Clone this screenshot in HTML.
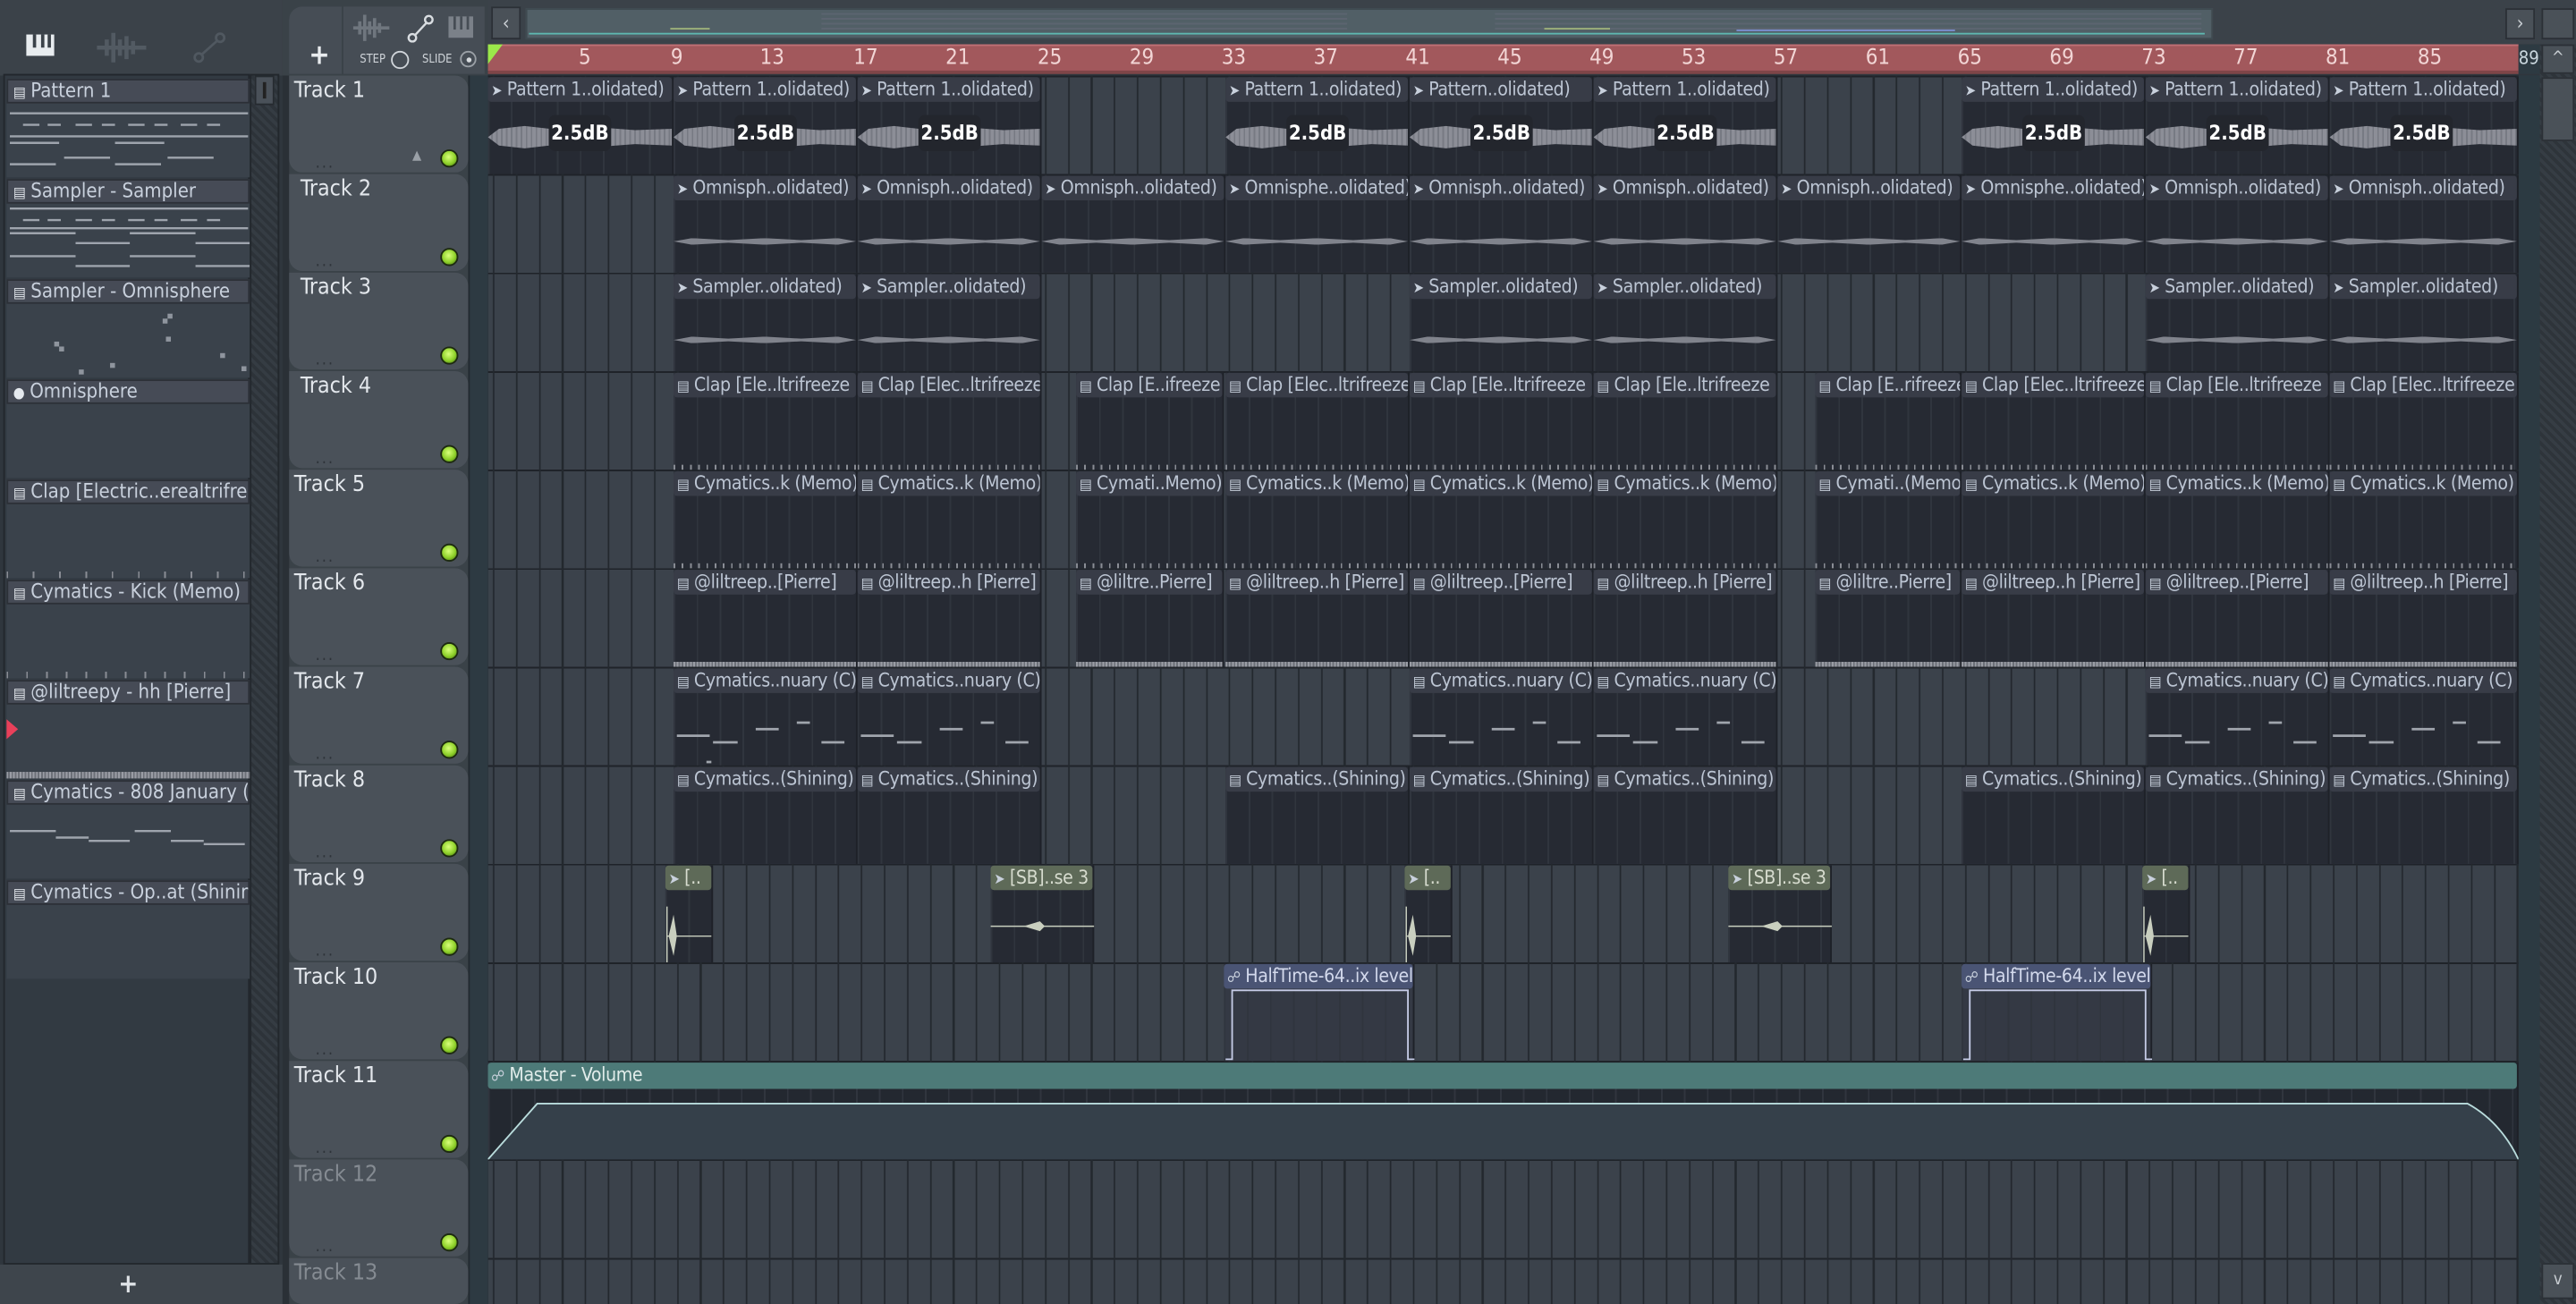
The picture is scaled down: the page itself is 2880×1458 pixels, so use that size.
<!DOCTYPE html>
<html><head><meta charset="utf-8"><style>
*{margin:0;padding:0;box-sizing:border-box}
html,body{width:2880px;height:1458px;overflow:hidden;background:#2f363d}
#w{position:absolute;left:0;top:0;width:1568px;height:794px;transform:scale(1.83674,1.83627);transform-origin:0 0;font-family:"DejaVu Sans Condensed","Liberation Sans",sans-serif;background:#2f363d}
.a{position:absolute}
.grid{position:absolute;left:297px;top:46px;width:1236px;height:748px;background-color:#3b424b;
background-image:repeating-linear-gradient(90deg,#23282e 0,#23282e 1px,transparent 1px,transparent 14px),repeating-linear-gradient(180deg,#1f2329 0,#1f2329 1px,transparent 1px,transparent 60px);background-position:3px 0,0 0}
.c{position:absolute;height:59px;background-color:#262a33;background-image:repeating-linear-gradient(90deg,#30353e 0,#30353e 1px,transparent 1px,transparent 14px);border-right:1px solid #1e2128}
.c b{display:block;height:15px;background:#383c47;color:#bcc5d3;font-weight:normal;font-size:11.5px;line-height:15px;white-space:nowrap;overflow:hidden;padding-left:2px;letter-spacing:-0.2px;border-radius:2px}
.c b i{font-style:normal;font-size:9px;color:#c8d0dc;margin-right:3px}
.th{position:absolute;left:176px;width:109px;height:59px;background:#4a5159;border-radius:0 8px 8px 8px;color:#e3e7ec;font-size:13.5px;padding:1px 0 0 3px}
.th .led{position:absolute;left:92px;top:45px;width:11px;height:11px;border-radius:50%;background:radial-gradient(circle at 45% 40%,#d8ff7a,#8fd12a 55%,#3d6a0c);border:1px solid #1d2a10}
.th .d{position:absolute;left:16px;top:48px;color:#2e3339;font-size:10px;letter-spacing:1px}
.wv{position:absolute;left:0;right:0;top:28px;height:17px;background:repeating-linear-gradient(90deg,#8c8e97 0,#8c8e97 2px,#777a83 2px,#777a83 3px);clip-path:polygon(0 50%,6% 20%,20% 10%,40% 25%,60% 15%,80% 25%,100% 20%,100% 80%,80% 75%,60% 85%,40% 75%,20% 90%,6% 80%)}
.db{position:absolute;top:23px;width:38px;height:22px;background:#23262d;border-radius:4px;color:#fff;font-size:12px;font-weight:bold;text-align:center;line-height:22px;left:37px}
.thin{position:absolute;left:0;right:0;top:38px;height:4px;background:#80838c;clip-path:polygon(0 50%,10% 0,30% 30%,50% 0,70% 30%,90% 0,100% 50%,90% 100%,70% 70%,50% 100%,30% 70%,10% 100%)}
.ticks{position:absolute;left:0;right:0;bottom:0;height:3px;background:repeating-linear-gradient(90deg,#8a8d95 0,#8a8d95 1px,transparent 1px,transparent 5px)}
.li{position:absolute;left:4px;width:148px;height:60px;background:#3a424b}
.li b{display:block;height:15px;background:#464b56;border:1px solid #2c3037;color:#c8d0dc;font-weight:normal;font-size:12px;line-height:13px;padding-left:3px;white-space:nowrap;overflow:hidden}
.li b i{font-style:normal;font-size:9px;margin-right:3px;color:#e5e9ee}
.rn{position:absolute;top:28px;color:#f2d5d5;font-size:13px;transform:translateX(-50%)}
</style></head><body><div id="w">
<div class="a" style="left:0;top:0;width:172px;height:46px;background:#3b4249"></div>
<svg class="a" style="left:15px;top:20px" width="20" height="16"><rect x="1" y="1" width="17" height="13" fill="#e8ecef"/><rect x="5" y="1" width="2" height="8" fill="#3b4249"/><rect x="10" y="1" width="2" height="8" fill="#3b4249"/><rect x="14" y="1" width="2" height="8" fill="#3b4249"/></svg>
<svg class="a" style="left:57px;top:18px" width="34" height="22"><path d="M2 11h30M8 6v10M12 2v18M16 6v10M20 4v14M24 7v8" stroke="#525a62" stroke-width="2.5"/></svg>
<svg class="a" style="left:117px;top:18px" width="22" height="22"><circle cx="4" cy="17" r="2.5" fill="none" stroke="#505860" stroke-width="1.5"/><circle cx="17" cy="5" r="2.5" fill="none" stroke="#505860" stroke-width="1.5"/><path d="M6 15L15 7" stroke="#505860" stroke-width="1.5"/></svg>
<div class="a" style="left:2px;top:45px;width:150px;height:725px;background:#323a42;border:1px solid #22272c"></div>
<div class="a" style="left:152px;top:45px;width:18px;height:725px;background:repeating-linear-gradient(45deg,#353c43 0,#353c43 2px,#2d3339 2px,#2d3339 4px);border:1px solid #22272c"></div>
<div class="a" style="left:155px;top:46px;width:12px;height:18px;background:#4a5159;border:1px solid #262b30"><div style="margin:3px auto;width:2px;height:10px;background:#222"></div></div>
<div class="li" style="top:48px"><b><i>▤</i>Pattern 1</b>
<svg width="148" height="45"><g stroke="#9ea4ad" stroke-width="1.3"><path d="M2 6h145M10 13h10M25 13h8M42 13h10M58 13h8M74 13h10M90 13h8M106 13h10M122 13h8M2 20h145M2 24h30M66 24h30M35 33h28M98 33h28M2 37h28M66 37h28"/></g></svg></div>
<div class="li" style="top:109px"><b><i>▤</i>Sampler - Sampler</b>
<svg width="148" height="45"><g stroke="#9ea4ad" stroke-width="1.3"><path d="M2 3h145M10 10h10M25 10h8M42 10h10M58 10h8M74 10h10M90 10h8M106 10h10M122 10h8M2 15h145M2 18h40M75 18h40M42 24h33M115 24h33M2 32h40M75 32h40M42 38h33M115 38h33"/></g></svg></div>
<div class="li" style="top:170px"><b><i>▤</i>Sampler - Omnisphere</b>
<svg width="148" height="45"><g fill="#8f959e"><rect x="29" y="23" width="3" height="3"/><rect x="32" y="26" width="3" height="3"/><rect x="98" y="6" width="3" height="3"/><rect x="95" y="9" width="3" height="3"/><rect x="97" y="20" width="3" height="3"/><rect x="63" y="36" width="3" height="3"/><rect x="130" y="30" width="3" height="3"/><rect x="44" y="40" width="3" height="3"/><rect x="143" y="38" width="3" height="3"/></g></svg></div>
<div class="li" style="top:231px"><b><i>●</i>Omnisphere</b></div>
<div class="li" style="top:292px"><b><i>▤</i>Clap [Electric..erealtrifreeze</b><div class="ticks" style="height:4px;background:repeating-linear-gradient(90deg,#8a8d95 0,#8a8d95 1px,transparent 1px,transparent 16px)"></div></div>
<div class="li" style="top:353px"><b><i>▤</i>Cymatics - Kick (Memo)</b><div class="ticks" style="height:4px;background:repeating-linear-gradient(90deg,#8a8d95 0,#8a8d95 1px,transparent 1px,transparent 12px)"></div></div>
<div class="li" style="top:414px"><b><i>▤</i>@liltreepy - hh [Pierre]</b><div class="ticks" style="height:4px;background:repeating-linear-gradient(90deg,#9a9da5 0,#9a9da5 1px,#6c7078 1px,#6c7078 2px)"></div></div>
<div class="a" style="left:4px;top:438px;width:0;height:0;border-left:7px solid #e8405a;border-top:6px solid transparent;border-bottom:6px solid transparent"></div>
<div class="li" style="top:475px"><b><i>▤</i>Cymatics - 808 January (C)</b>
<svg width="148" height="45"><g stroke="#9ea4ad" stroke-width="1.3"><path d="M2 16h28M30 20h20M78 16h22M50 22h25M100 22h20M120 24h25"/></g></svg></div>
<div class="li" style="top:536px"><b><i>▤</i>Cymatics - Op..at (Shining)</b></div>
<div class="a" style="left:0;top:770px;width:172px;height:24px;background:#3e454c;color:#dfe3e7;font-size:16px;text-align:center;line-height:24px;font-weight:bold;padding-right:16px">+</div>

<div class="a" style="left:172px;top:0;width:125px;height:794px;background:#3a4248"></div>
<div class="a" style="left:172px;top:46px;width:4px;height:748px;background:#2a3036"></div>
<div class="a" style="left:285px;top:46px;width:12px;height:748px;background:#2d3a42;border-left:1px solid #232a30"></div>
<div class="a" style="left:176px;top:4px;width:32px;height:41px;background:#464d55;border-radius:8px 0 0 0"></div>
<div class="a" style="left:188px;top:24px;color:#e8ebee;font-size:17px;font-weight:bold">+</div>
<div class="a" style="left:209px;top:4px;width:86px;height:41px;background:#464d55"></div>
<svg class="a" style="left:213px;top:8px" width="80" height="18"><path d="M2 9h22M6 5v8M9 1v16M12 5v8M15 3v12M18 6v6" stroke="#6f767e" stroke-width="2"/><circle cx="38" cy="15" r="2.3" fill="none" stroke="#d9dde1" stroke-width="1.3"/><circle cx="48" cy="4" r="2.3" fill="none" stroke="#d9dde1" stroke-width="1.3"/><path d="M40 13l6.5-7" stroke="#d9dde1" stroke-width="1.3"/><rect x="60" y="2" width="15" height="13" fill="#7b8189"/><rect x="63" y="2" width="1.5" height="8" fill="#464d55"/><rect x="67" y="2" width="1.5" height="8" fill="#464d55"/><rect x="71" y="2" width="1.5" height="8" fill="#464d55"/></svg>
<div class="a" style="left:219px;top:32px;color:#cfd4d9;font-size:7px">STEP</div>
<div class="a" style="left:238px;top:31px;width:11px;height:11px;border:1px solid #cfd4d9;border-radius:50%"></div>
<div class="a" style="left:257px;top:32px;color:#cfd4d9;font-size:7px">SLIDE</div>
<div class="a" style="left:280px;top:31px;width:10px;height:10px;border:1px solid #9aa0a6;border-radius:50%"><div style="margin:2.5px;width:3px;height:3px;background:#d6dadd;border-radius:50%"></div></div>
<div class="a" style="left:297px;top:0;width:1271px;height:27px;background:#3b4249"></div>
<div class="a" style="left:299px;top:4px;width:18px;height:20px;background:#4a5158;border:1px solid #2b3036;color:#c9ced3;font-size:12px;text-align:center;line-height:18px">‹</div>
<div class="a" style="left:320px;top:5px;width:1027px;height:19px;background:#515f66;border:1px solid #3f4a50"></div>
<div class="a" style="left:500px;top:8px;width:320px;height:10px;background:repeating-linear-gradient(180deg,#5c6470 0,#5c6470 1px,transparent 1px,transparent 3px)"></div>
<div class="a" style="left:910px;top:8px;width:430px;height:10px;background:repeating-linear-gradient(180deg,#5c6470 0,#5c6470 1px,transparent 1px,transparent 3px)"></div>
<div class="a" style="left:322px;top:20px;width:1020px;height:1px;background:#5fb8b0"></div>
<div class="a" style="left:1057px;top:18px;width:133px;height:1px;background:#7a8fd0"></div>
<div class="a" style="left:408px;top:17px;width:24px;height:1px;background:#9fb47a"></div>
<div class="a" style="left:940px;top:17px;width:40px;height:1px;background:#9fb47a"></div>
<div class="a" style="left:1525px;top:5px;width:18px;height:19px;background:#4a5158;border:1px solid #2b3036;color:#c9ced3;font-size:12px;text-align:center;line-height:17px">›</div>
<div class="a" style="left:1547px;top:5px;width:20px;height:19px;background:#4a5158;border:1px solid #2b3036"></div>
<div class="a" style="left:297px;top:27px;width:1236px;height:18px;background:#a2585c;border-top:1px solid #c07075;border-bottom:2px solid #7f4548"></div>
<div class="a" style="left:1533px;top:27px;width:13px;height:18px;background:#2d3a42;color:#c9d6dd;font-size:11px;line-height:18px">89</div>
<div class="a" style="left:297px;top:27px;width:0;height:0;border-left:9px solid #9be84a;border-bottom:12px solid transparent"></div>
<div class="rn" style="left:356px">5</div><div class="rn" style="left:412px">9</div><div class="rn" style="left:470px">13</div><div class="rn" style="left:527px">17</div><div class="rn" style="left:583px">21</div><div class="rn" style="left:639px">25</div><div class="rn" style="left:695px">29</div><div class="rn" style="left:751px">33</div><div class="rn" style="left:807px">37</div><div class="rn" style="left:863px">41</div><div class="rn" style="left:919px">45</div><div class="rn" style="left:975px">49</div><div class="rn" style="left:1031px">53</div><div class="rn" style="left:1087px">57</div><div class="rn" style="left:1143px">61</div><div class="rn" style="left:1199px">65</div><div class="rn" style="left:1255px">69</div><div class="rn" style="left:1311px">73</div><div class="rn" style="left:1367px">77</div><div class="rn" style="left:1423px">81</div><div class="rn" style="left:1479px">85</div>
<div class="a" style="left:1533px;top:46px;width:13px;height:748px;background:#2c3a42"></div>
<div class="a" style="left:1546px;top:27px;width:22px;height:767px;background:repeating-linear-gradient(45deg,#363d44 0,#363d44 2px,#2e343a 2px,#2e343a 4px)"></div>
<div class="a" style="left:1547px;top:27px;width:20px;height:18px;background:#4a5158;border:1px solid #2b3036;color:#c9ced3;font-size:10px;text-align:center;line-height:16px">^</div>
<div class="a" style="left:1547px;top:47px;width:20px;height:39px;background:#4a5158;border:1px solid #2b3036"></div>
<div class="a" style="left:1547px;top:769px;width:20px;height:22px;background:#4a5158;border:1px solid #2b3036;color:#c9ced3;font-size:10px;text-align:center;line-height:20px">v</div>

<div class="grid"></div>

<div class="th" style="top:46px">Track 1<span style="position:absolute;left:75px;top:44px;color:#9aa0a7;font-size:8px">▲</span><span class="d">...</span><span class="led"></span></div>
<div class="th" style="top:106px">&nbsp;Track 2<span class="d">...</span><span class="led"></span></div>
<div class="th" style="top:166px">&nbsp;Track 3<span class="d">...</span><span class="led"></span></div>
<div class="th" style="top:226px">&nbsp;Track 4<span class="d">...</span><span class="led"></span></div>
<div class="th" style="top:286px">Track 5<span class="d">...</span><span class="led"></span></div>
<div class="th" style="top:346px">Track 6<span class="d">...</span><span class="led"></span></div>
<div class="th" style="top:406px">Track 7<span class="d">...</span><span class="led"></span></div>
<div class="th" style="top:466px">Track 8<span class="d">...</span><span class="led"></span></div>
<div class="th" style="top:526px">Track 9<span class="d">...</span><span class="led"></span></div>
<div class="th" style="top:586px">Track 10<span class="d">...</span><span class="led"></span></div>
<div class="th" style="top:646px">Track 11<span class="d">...</span><span class="led"></span></div>
<div class="th" style="top:706px;color:#858b92">Track 12<span class="d">...</span><span class="led"></span></div>
<div class="th" style="top:766px;color:#858b92;height:28px">Track 13</div>

<div class="c" style="left:297px;top:47px;width:113px"><b><i>➤</i>Pattern 1..olidated)</b><div class="wv"></div><div class="db">2.5dB</div></div>
<div class="c" style="left:410px;top:47px;width:112px"><b><i>➤</i>Pattern 1..olidated)</b><div class="wv"></div><div class="db">2.5dB</div></div>
<div class="c" style="left:522px;top:47px;width:112px"><b><i>➤</i>Pattern 1..olidated)</b><div class="wv"></div><div class="db">2.5dB</div></div>
<div class="c" style="left:746px;top:47px;width:112px"><b><i>➤</i>Pattern 1..olidated)</b><div class="wv"></div><div class="db">2.5dB</div></div>
<div class="c" style="left:858px;top:47px;width:112px"><b><i>➤</i>Pattern..olidated)</b><div class="wv"></div><div class="db">2.5dB</div></div>
<div class="c" style="left:970px;top:47px;width:112px"><b><i>➤</i>Pattern 1..olidated)</b><div class="wv"></div><div class="db">2.5dB</div></div>
<div class="c" style="left:1194px;top:47px;width:112px"><b><i>➤</i>Pattern 1..olidated)</b><div class="wv"></div><div class="db">2.5dB</div></div>
<div class="c" style="left:1306px;top:47px;width:112px"><b><i>➤</i>Pattern 1..olidated)</b><div class="wv"></div><div class="db">2.5dB</div></div>
<div class="c" style="left:1418px;top:47px;width:115px"><b><i>➤</i>Pattern 1..olidated)</b><div class="wv"></div><div class="db">2.5dB</div></div>
<div class="c" style="left:410px;top:107px;width:112px"><b><i>➤</i>Omnisph..olidated)</b><div class="thin"></div></div>
<div class="c" style="left:522px;top:107px;width:112px"><b><i>➤</i>Omnisph..olidated)</b><div class="thin"></div></div>
<div class="c" style="left:634px;top:107px;width:112px"><b><i>➤</i>Omnisph..olidated)</b><div class="thin"></div></div>
<div class="c" style="left:746px;top:107px;width:112px"><b><i>➤</i>Omnisphe..olidated)</b><div class="thin"></div></div>
<div class="c" style="left:858px;top:107px;width:112px"><b><i>➤</i>Omnisph..olidated)</b><div class="thin"></div></div>
<div class="c" style="left:970px;top:107px;width:112px"><b><i>➤</i>Omnisph..olidated)</b><div class="thin"></div></div>
<div class="c" style="left:1082px;top:107px;width:112px"><b><i>➤</i>Omnisph..olidated)</b><div class="thin"></div></div>
<div class="c" style="left:1194px;top:107px;width:112px"><b><i>➤</i>Omnisphe..olidated)</b><div class="thin"></div></div>
<div class="c" style="left:1306px;top:107px;width:112px"><b><i>➤</i>Omnisph..olidated)</b><div class="thin"></div></div>
<div class="c" style="left:1418px;top:107px;width:115px"><b><i>➤</i>Omnisph..olidated)</b><div class="thin"></div></div>
<div class="c" style="left:410px;top:167px;width:112px"><b><i>➤</i>Sampler..olidated)</b><div class="thin"></div></div>
<div class="c" style="left:522px;top:167px;width:112px"><b><i>➤</i>Sampler..olidated)</b><div class="thin"></div></div>
<div class="c" style="left:858px;top:167px;width:112px"><b><i>➤</i>Sampler..olidated)</b><div class="thin"></div></div>
<div class="c" style="left:970px;top:167px;width:112px"><b><i>➤</i>Sampler..olidated)</b><div class="thin"></div></div>
<div class="c" style="left:1306px;top:167px;width:112px"><b><i>➤</i>Sampler..olidated)</b><div class="thin"></div></div>
<div class="c" style="left:1418px;top:167px;width:115px"><b><i>➤</i>Sampler..olidated)</b><div class="thin"></div></div>
<div class="c" style="left:410px;top:227px;width:112px"><b><i>▤</i>Clap [Ele..ltrifreeze</b><div class="ticks"></div></div>
<div class="c" style="left:522px;top:227px;width:112px"><b><i>▤</i>Clap [Elec..ltrifreeze</b><div class="ticks"></div></div>
<div class="c" style="left:655px;top:227px;width:90px"><b><i>▤</i>Clap [E..ifreeze</b><div class="ticks"></div></div>
<div class="c" style="left:746px;top:227px;width:112px"><b><i>▤</i>Clap [Elec..ltrifreeze</b><div class="ticks"></div></div>
<div class="c" style="left:858px;top:227px;width:112px"><b><i>▤</i>Clap [Ele..ltrifreeze</b><div class="ticks"></div></div>
<div class="c" style="left:970px;top:227px;width:112px"><b><i>▤</i>Clap [Ele..ltrifreeze</b><div class="ticks"></div></div>
<div class="c" style="left:1105px;top:227px;width:89px"><b><i>▤</i>Clap [E..rifreeze</b><div class="ticks"></div></div>
<div class="c" style="left:1194px;top:227px;width:112px"><b><i>▤</i>Clap [Elec..ltrifreeze</b><div class="ticks"></div></div>
<div class="c" style="left:1306px;top:227px;width:112px"><b><i>▤</i>Clap [Ele..ltrifreeze</b><div class="ticks"></div></div>
<div class="c" style="left:1418px;top:227px;width:115px"><b><i>▤</i>Clap [Elec..ltrifreeze</b><div class="ticks"></div></div>
<div class="c" style="left:410px;top:287px;width:112px"><b><i>▤</i>Cymatics..k (Memo)</b><div class="ticks"></div></div>
<div class="c" style="left:522px;top:287px;width:112px"><b><i>▤</i>Cymatics..k (Memo)</b><div class="ticks"></div></div>
<div class="c" style="left:655px;top:287px;width:90px"><b><i>▤</i>Cymati..Memo)</b><div class="ticks"></div></div>
<div class="c" style="left:746px;top:287px;width:112px"><b><i>▤</i>Cymatics..k (Memo)</b><div class="ticks"></div></div>
<div class="c" style="left:858px;top:287px;width:112px"><b><i>▤</i>Cymatics..k (Memo)</b><div class="ticks"></div></div>
<div class="c" style="left:970px;top:287px;width:112px"><b><i>▤</i>Cymatics..k (Memo)</b><div class="ticks"></div></div>
<div class="c" style="left:1105px;top:287px;width:89px"><b><i>▤</i>Cymati..(Memo)</b><div class="ticks"></div></div>
<div class="c" style="left:1194px;top:287px;width:112px"><b><i>▤</i>Cymatics..k (Memo)</b><div class="ticks"></div></div>
<div class="c" style="left:1306px;top:287px;width:112px"><b><i>▤</i>Cymatics..k (Memo)</b><div class="ticks"></div></div>
<div class="c" style="left:1418px;top:287px;width:115px"><b><i>▤</i>Cymatics..k (Memo)</b><div class="ticks"></div></div>
<div class="c" style="left:410px;top:347px;width:112px"><b><i>▤</i>@liltreep..[Pierre]</b><div class="ticks" style="background:repeating-linear-gradient(90deg,#9a9da5 0,#9a9da5 1px,#6c7078 1px,#6c7078 2px)"></div></div>
<div class="c" style="left:522px;top:347px;width:112px"><b><i>▤</i>@liltreep..h [Pierre]</b><div class="ticks" style="background:repeating-linear-gradient(90deg,#9a9da5 0,#9a9da5 1px,#6c7078 1px,#6c7078 2px)"></div></div>
<div class="c" style="left:655px;top:347px;width:90px"><b><i>▤</i>@liltre..Pierre]</b><div class="ticks" style="background:repeating-linear-gradient(90deg,#9a9da5 0,#9a9da5 1px,#6c7078 1px,#6c7078 2px)"></div></div>
<div class="c" style="left:746px;top:347px;width:112px"><b><i>▤</i>@liltreep..h [Pierre]</b><div class="ticks" style="background:repeating-linear-gradient(90deg,#9a9da5 0,#9a9da5 1px,#6c7078 1px,#6c7078 2px)"></div></div>
<div class="c" style="left:858px;top:347px;width:112px"><b><i>▤</i>@liltreep..[Pierre]</b><div class="ticks" style="background:repeating-linear-gradient(90deg,#9a9da5 0,#9a9da5 1px,#6c7078 1px,#6c7078 2px)"></div></div>
<div class="c" style="left:970px;top:347px;width:112px"><b><i>▤</i>@liltreep..h [Pierre]</b><div class="ticks" style="background:repeating-linear-gradient(90deg,#9a9da5 0,#9a9da5 1px,#6c7078 1px,#6c7078 2px)"></div></div>
<div class="c" style="left:1105px;top:347px;width:89px"><b><i>▤</i>@liltre..Pierre]</b><div class="ticks" style="background:repeating-linear-gradient(90deg,#9a9da5 0,#9a9da5 1px,#6c7078 1px,#6c7078 2px)"></div></div>
<div class="c" style="left:1194px;top:347px;width:112px"><b><i>▤</i>@liltreep..h [Pierre]</b><div class="ticks" style="background:repeating-linear-gradient(90deg,#9a9da5 0,#9a9da5 1px,#6c7078 1px,#6c7078 2px)"></div></div>
<div class="c" style="left:1306px;top:347px;width:112px"><b><i>▤</i>@liltreep..[Pierre]</b><div class="ticks" style="background:repeating-linear-gradient(90deg,#9a9da5 0,#9a9da5 1px,#6c7078 1px,#6c7078 2px)"></div></div>
<div class="c" style="left:1418px;top:347px;width:115px"><b><i>▤</i>@liltreep..h [Pierre]</b><div class="ticks" style="background:repeating-linear-gradient(90deg,#9a9da5 0,#9a9da5 1px,#6c7078 1px,#6c7078 2px)"></div></div>
<div class="c" style="left:410px;top:407px;width:112px"><b><i>▤</i>Cymatics..nuary (C)</b><svg width="112" height="44"><path d="M2 26h20M24 30h15M50 22h14M75 18h8M90 30h14M20 42h3" stroke="#a0a5ad" stroke-width="1.5"/></svg></div>
<div class="c" style="left:522px;top:407px;width:112px"><b><i>▤</i>Cymatics..nuary (C)</b><svg width="112" height="44"><path d="M2 26h20M24 30h15M50 22h14M75 18h8M90 30h14" stroke="#a0a5ad" stroke-width="1.5"/></svg></div>
<div class="c" style="left:858px;top:407px;width:112px"><b><i>▤</i>Cymatics..nuary (C)</b><svg width="112" height="44"><path d="M2 26h20M24 30h15M50 22h14M75 18h8M90 30h14" stroke="#a0a5ad" stroke-width="1.5"/></svg></div>
<div class="c" style="left:970px;top:407px;width:112px"><b><i>▤</i>Cymatics..nuary (C)</b><svg width="112" height="44"><path d="M2 26h20M24 30h15M50 22h14M75 18h8M90 30h14" stroke="#a0a5ad" stroke-width="1.5"/></svg></div>
<div class="c" style="left:1306px;top:407px;width:112px"><b><i>▤</i>Cymatics..nuary (C)</b><svg width="112" height="44"><path d="M2 26h20M24 30h15M50 22h14M75 18h8M90 30h14" stroke="#a0a5ad" stroke-width="1.5"/></svg></div>
<div class="c" style="left:1418px;top:407px;width:115px"><b><i>▤</i>Cymatics..nuary (C)</b><svg width="112" height="44"><path d="M2 26h20M24 30h15M50 22h14M75 18h8M90 30h14" stroke="#a0a5ad" stroke-width="1.5"/></svg></div>
<div class="c" style="left:410px;top:467px;width:112px"><b><i>▤</i>Cymatics..(Shining)</b></div>
<div class="c" style="left:522px;top:467px;width:112px"><b><i>▤</i>Cymatics..(Shining)</b></div>
<div class="c" style="left:746px;top:467px;width:112px"><b><i>▤</i>Cymatics..(Shining)</b></div>
<div class="c" style="left:858px;top:467px;width:112px"><b><i>▤</i>Cymatics..(Shining)</b></div>
<div class="c" style="left:970px;top:467px;width:112px"><b><i>▤</i>Cymatics..(Shining)</b></div>
<div class="c" style="left:1194px;top:467px;width:112px"><b><i>▤</i>Cymatics..(Shining)</b></div>
<div class="c" style="left:1306px;top:467px;width:112px"><b><i>▤</i>Cymatics..(Shining)</b></div>
<div class="c" style="left:1418px;top:467px;width:115px"><b><i>▤</i>Cymatics..(Shining)</b></div>
<div class="c" style="left:405px;top:527px;width:29px"><b style="background:#5e6a58;color:#d7dccf"><i>➤</i>[..</b><svg width="29" height="44"><path d="M1 44V10M1 28h27" stroke="#c9cfbf" stroke-width="0.8"/><path d="M2 28 L5 15 L7 28 L5 40Z" fill="#c9cfbf"/></svg></div>
<div class="c" style="left:603px;top:527px;width:63px"><b style="background:#5e6a58;color:#d7dccf"><i>➤</i>[SB]..se 3</b><svg width="63" height="44"><path d="M0 22h63" stroke="#c9cfbf" stroke-width="0.8"/><path d="M20 22 L30 19 L33 22 L30 25Z" fill="#c9cfbf"/></svg></div>
<div class="c" style="left:855px;top:527px;width:29px"><b style="background:#5e6a58;color:#d7dccf"><i>➤</i>[..</b><svg width="29" height="44"><path d="M1 44V10M1 28h27" stroke="#c9cfbf" stroke-width="0.8"/><path d="M2 28 L5 15 L7 28 L5 40Z" fill="#c9cfbf"/></svg></div>
<div class="c" style="left:1052px;top:527px;width:63px"><b style="background:#5e6a58;color:#d7dccf"><i>➤</i>[SB]..se 3</b><svg width="63" height="44"><path d="M0 22h63" stroke="#c9cfbf" stroke-width="0.8"/><path d="M20 22 L30 19 L33 22 L30 25Z" fill="#c9cfbf"/></svg></div>
<div class="c" style="left:1304px;top:527px;width:29px"><b style="background:#5e6a58;color:#d7dccf"><i>➤</i>[..</b><svg width="29" height="44"><path d="M1 44V10M1 28h27" stroke="#c9cfbf" stroke-width="0.8"/><path d="M2 28 L5 15 L7 28 L5 40Z" fill="#c9cfbf"/></svg></div>
<div class="c" style="left:745px;top:587px;width:116px;background-color:#343944"><b style="background:#4a5474;color:#d3d9ec"><i>☍</i>HalfTime-64..ix level</b><svg class="a" style="left:0;top:15px" width="116" height="44"><path d="M1 43H5V1H112V43H116" fill="none" stroke="#c5cbe6" stroke-width="1"/></svg></div>
<div class="c" style="left:1194px;top:587px;width:116px;background-color:#343944"><b style="background:#4a5474;color:#d3d9ec"><i>☍</i>HalfTime-64..ix level</b><svg class="a" style="left:0;top:15px" width="116" height="44"><path d="M1 43H5V1H112V43H116" fill="none" stroke="#c5cbe6" stroke-width="1"/></svg></div>
<div class="c" style="left:297px;top:647px;width:1236px;background-color:#232830"><b style="background:#4d7a78;color:#e1ecea;height:16px"><i>☍</i>Master - Volume</b><svg class="a" style="left:0;top:16px" width="1236" height="43"><path d="M0 43L30 9H1205Q1225 20 1236 43Z" fill="#35404a"/><path d="M0 43L30 9H1205Q1225 20 1236 43" fill="none" stroke="#b9dcdc" stroke-width="1"/></svg></div>
</div></body></html>
